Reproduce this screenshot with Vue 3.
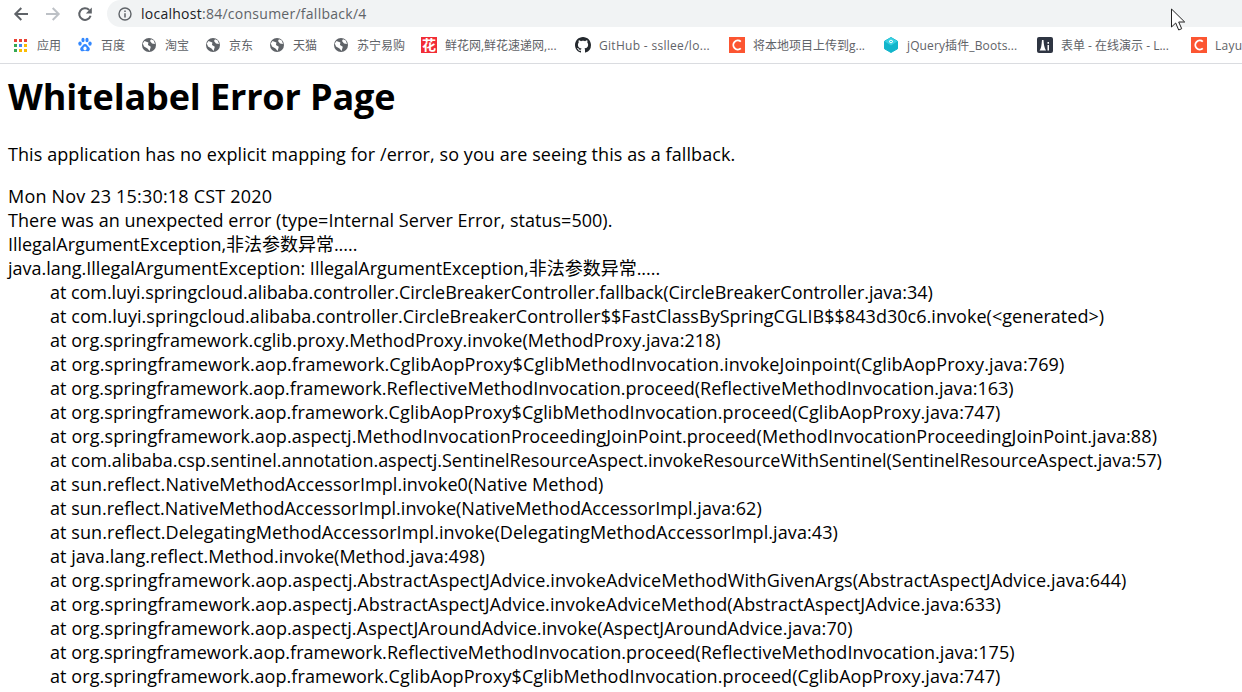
<script setup>
const bookmarks = [
  { id: 'apps', label: '应用', width: 64 },
  { id: 'baidu', label: '百度', width: 64 },
  { id: 'globe', label: '淘宝', width: 64 },
  { id: 'globe', label: '京东', width: 64 },
  { id: 'globe', label: '天猫', width: 64 },
  { id: 'globe', label: '苏宁易购', width: 88 },
  { id: 'flower', label: '鲜花网,鲜花速递网,...', width: 154 },
  { id: 'github', label: 'GitHub - ssllee/lo...', width: 154, spacing: 0.3 },
  { id: 'csdn', label: '将本地项目上传到g...', width: 154 },
  { id: 'jq', label: 'jQuery插件_Boots...', width: 154, spacing: 0.12 },
  { id: 'lt', label: '表单 - 在线演示 - L...', width: 154 },
  { id: 'csdn', label: 'Layu', width: 51, spacing: 0.3 }
]
const appColors = ['#ea4335', '#ea4335', '#ea4335', '#34a853', '#4285f4', '#fbbc04', '#34a853', '#fbbc04', '#fbbc04']
const appCells = appColors.map((fill, i) => ({ fill, x: 1 + (i % 3) * 5, y: 2 + Math.floor(i / 3) * 5 }))
const head = [
  { text: 'Mon Nov 23 15:30:18 CST 2020', spacing: 0.187 },
  { text: 'There was an unexpected error (type=Internal Server Error, status=500).', spacing: 0.025 },
  { text: 'IllegalArgumentException,非法参数异常.....', spacing: -0.034 },
  { text: 'java.lang.IllegalArgumentException: IllegalArgumentException,非法参数异常.....', spacing: -0.006 }
]
const stack = [
  { text: 'com.luyi.springcloud.alibaba.controller.CircleBreakerController.fallback(CircleBreakerController.java:34)', spacing: -0.05 },
  { text: 'com.luyi.springcloud.alibaba.controller.CircleBreakerController$$FastClassBySpringCGLIB$$843d30c6.invoke(<generated>)', spacing: 0.04 },
  { text: 'org.springframework.cglib.proxy.MethodProxy.invoke(MethodProxy.java:218)', spacing: 0.03 },
  { text: 'org.springframework.aop.framework.CglibAopProxy$CglibMethodInvocation.invokeJoinpoint(CglibAopProxy.java:769)', spacing: 0.1 },
  { text: 'org.springframework.aop.framework.ReflectiveMethodInvocation.proceed(ReflectiveMethodInvocation.java:163)', spacing: 0.025 },
  { text: 'org.springframework.aop.framework.CglibAopProxy$CglibMethodInvocation.proceed(CglibAopProxy.java:747)', spacing: 0.08 },
  { text: 'org.springframework.aop.aspectj.MethodInvocationProceedingJoinPoint.proceed(MethodInvocationProceedingJoinPoint.java:88)', spacing: 0.096 },
  { text: 'com.alibaba.csp.sentinel.annotation.aspectj.SentinelResourceAspect.invokeResourceWithSentinel(SentinelResourceAspect.java:57)', spacing: -0.015 },
  { text: 'sun.reflect.NativeMethodAccessorImpl.invoke0(Native Method)', spacing: 0.064 },
  { text: 'sun.reflect.NativeMethodAccessorImpl.invoke(NativeMethodAccessorImpl.java:62)', spacing: 0.03 },
  { text: 'sun.reflect.DelegatingMethodAccessorImpl.invoke(DelegatingMethodAccessorImpl.java:43)', spacing: 0.08 },
  { text: 'java.lang.reflect.Method.invoke(Method.java:498)', spacing: 0.04 },
  { text: 'org.springframework.aop.aspectj.AbstractAspectJAdvice.invokeAdviceMethodWithGivenArgs(AbstractAspectJAdvice.java:644)', spacing: 0.122 },
  { text: 'org.springframework.aop.aspectj.AbstractAspectJAdvice.invokeAdviceMethod(AbstractAspectJAdvice.java:633)', spacing: 0.117 },
  { text: 'org.springframework.aop.aspectj.AspectJAroundAdvice.invoke(AspectJAroundAdvice.java:70)', spacing: 0.1 },
  { text: 'org.springframework.aop.framework.ReflectiveMethodInvocation.proceed(ReflectiveMethodInvocation.java:175)', spacing: 0.033 },
  { text: 'org.springframework.aop.framework.CglibAopProxy$CglibMethodInvocation.proceed(CglibAopProxy.java:747)', spacing: 0.08 }
]
</script>

<template>
  <div class="window">
    <header class="toolbar">
      <div class="nav">
        <svg class="nav-icon" viewBox="0 0 16 16"><path d="M15 8H2.500M8.300 2 2.300 8 8.300 14" fill="none" stroke="#5f6368" stroke-width="2"/></svg>
        <svg class="nav-icon" viewBox="0 0 16 16"><path d="M1 8h12.500M7.700 2 13.700 8 7.700 14" fill="none" stroke="#bdc1c6" stroke-width="2"/></svg>
        <svg class="nav-icon" viewBox="0 0 16 16"><path d="M13.600 9.800A5.800 5.800 0 1 1 12.200 4" fill="none" stroke="#5f6368" stroke-width="2"/><path d="M14.800 1.400v6H8.800z" fill="#5f6368"/></svg>
      </div>
      <div class="omnibox">
        <svg class="info" viewBox="0 0 14 14"><circle cx="7" cy="7" r="6" fill="none" stroke="#5f6368" stroke-width="1.400"/><path d="M7 6.200v4.200M7 3.600v1.500" stroke="#5f6368" stroke-width="1.500"/></svg>
        <span class="url"><span class="host">localhost</span>:84/consumer/fallback/4</span>
      </div>
      <svg class="cursor" viewBox="0 0 16 24"><path d="M1.500 1v18l4.200-4 3 7 3-1.300-3-6.700h6z" fill="#fff" stroke="#222" stroke-width="1"/></svg>
    </header>

    <nav class="bookmarks">
      <div v-for="(b, i) in bookmarks" :key="i" class="bookmark" :style="{ width: b.width + 'px' }">
        <svg v-if="b.id === 'apps'" class="fav" viewBox="0 0 16 16">
          <rect v-for="(c, j) in appCells" :key="j" :x="c.x" :y="c.y" width="3" height="3" :fill="c.fill"/>
        </svg>
        <svg v-else-if="b.id === 'baidu'" class="fav" viewBox="0 0 16 16" fill="#3388ff">
          <ellipse cx="3" cy="6.600" rx="1.700" ry="2.200"/><ellipse cx="6" cy="3" rx="1.600" ry="2.300"/><ellipse cx="10" cy="3" rx="1.600" ry="2.300"/><ellipse cx="13" cy="6.600" rx="1.700" ry="2.200"/>
          <path d="M8 7c-2 0-2.500 2-4 3.200-1.500 1.300-.8 4.300 1.600 4 1-.1 1.600-.4 2.400-.4s1.500.3 2.500.4c2.400.3 3-2.700 1.500-4C10.500 9 10 7 8 7z"/>
          <ellipse cx="8" cy="11.400" rx="1.600" ry="1.900" fill="#fff"/>
        </svg>
        <svg v-else-if="b.id === 'globe'" class="fav" viewBox="0 0 16 16">
          <circle cx="8" cy="8" r="7" fill="#5f6368"/>
          <path d="M3.500 4 7.400 5.600 7 8 9.800 9.800 8.600 14 6.500 11.500 3 9.600 1.800 6.500zM10 2.300l2.800 1.300L14 7l-3-.6L9 4z" fill="#fff"/>
        </svg>
        <span v-else-if="b.id === 'flower'" class="fav flower">花</span>
        <svg v-else-if="b.id === 'github'" class="fav" viewBox="0 0 16 16">
          <path fill="#24292e" d="M8 0C3.580 0 0 3.580 0 8c0 3.540 2.290 6.530 5.470 7.590.4.070.55-.17.55-.38 0-.19-.01-.82-.01-1.490-2.010.37-2.530-.49-2.690-.94-.09-.23-.48-.94-.82-1.130-.28-.15-.68-.52-.01-.53.63-.01 1.080.58 1.230.82.720 1.210 1.870.870 2.330.660.070-.520.280-.870.510-1.070-1.780-.200-3.640-.890-3.640-3.950 0-.870.310-1.590.820-2.150-.080-.200-.360-1.020.080-2.120 0 0 .670-.210 2.200.820.640-.180 1.320-.270 2-.270s1.360.090 2 .270c1.530-1.040 2.200-.820 2.200-.820.440 1.100.160 1.920.080 2.120.510.560.820 1.270.820 2.150 0 3.070-1.870 3.750-3.650 3.950.290.250.540.730.540 1.480 0 1.070-.010 1.930-.010 2.200 0 .210.150.460.550.380A8.010 8.010 0 0 0 16 8c0-4.420-3.580-8-8-8z"/>
        </svg>
        <svg v-else-if="b.id === 'csdn'" class="fav" viewBox="0 0 16 16">
          <rect width="16" height="16" fill="#fc5531"/>
          <path d="M11.800 4.600A4.500 4.500 0 1 0 11.800 11.400" fill="none" stroke="#fff" stroke-width="1.900"/>
        </svg>
        <svg v-else-if="b.id === 'jq'" class="fav" viewBox="0 0 16 16">
          <path d="M8 .5 14.500 4.200v7.600L8 15.500 1.500 11.800V4.200z" fill="#12b5cb" stroke="#12b5cb" stroke-linejoin="round"/>
          <path d="M8 .5 14.500 4.200 8 8.500 1.500 4.200z" fill="#38d0e2"/>
          <path d="M8 3 10 4.500 8 6 6 4.500z" fill="none" stroke="#fff" stroke-width="1"/>
        </svg>
        <svg v-else class="fav" viewBox="0 0 16 16">
          <rect width="16" height="16" rx="2" fill="#2f3542"/>
          <path d="M2.500 13.500C4 12 4.500 9 5 3h1.500c.2 4 .8 8 2.500 10.500zM10.500 8H12v5.500h-1.500zM10.500 5H12v1.700h-1.500z" fill="#fff"/>
        </svg>
        <span class="bm-label" :style="{ letterSpacing: (b.spacing || 0) + 'px' }">{{ b.label }}</span>
      </div>
    </nav>

    <main class="page">
      <h1 class="title">Whitelabel Error Page</h1>
      <p class="lead">This application has no explicit mapping for /error, so you are seeing this as a fallback.</p>
      <div v-for="(l, i) in head" :key="'h' + i" :style="{ letterSpacing: l.spacing + 'px' }">{{ l.text }}</div>
      <div v-for="(s, i) in stack" :key="i" class="frame" :style="{ letterSpacing: s.spacing + 'px' }">at {{ s.text }}</div>
    </main>
  </div>
</template>

<style>
html, body { margin: 0; background: #fff; overflow: hidden; }
</style>

<style scoped>
.window {
  width: 1242px;
  height: 692px;
  overflow: hidden;
  font-family: "Open Sans", "Noto Sans CJK SC", sans-serif;
  color: #000;
}
.toolbar {
  position: relative;
  height: 27px;
  display: flex;
  padding-left: 13px;
}
.nav { display: flex; gap: 16px; align-items: center; height: 27px; }
.nav-icon { width: 16px; height: 16px; display: block; }
.omnibox {
  margin-left: 14px;
  flex: 1;
  background: #f1f3f4;
  border-radius: 14px 0 0 14px;
  display: flex;
  align-items: center;
  padding-left: 11px;
  gap: 9px;
}
.info { width: 14px; height: 14px; }
.url { font-size: 14px; color: #5f6368; letter-spacing: 0.26px; }
.host { color: #202124; }
.cursor { position: absolute; left: 1170px; top: 8px; width: 16px; height: 24px; }
.bookmarks {
  height: 36px;
  border-bottom: 1px solid #dadce0;
  display: flex;
  align-items: center;
  padding-left: 13px;
  white-space: nowrap;
  overflow: hidden;
}
.bookmark { display: flex; align-items: center; gap: 8px; flex: none; }
.fav { width: 16px; height: 16px; flex: none; }
.flower {
  background: #f22c36;
  color: #fff;
  font-size: 14px;
  font-weight: 700;
  line-height: 16px;
  text-align: center;
}
.bm-label { font-size: 12px; color: #5f6368; }
.page {
  font-size: 18px;
  line-height: 24px;
  padding: 0 8px;
  letter-spacing: 0.08px;
  white-space: nowrap;
}
.title {
  font-size: 36px;
  line-height: 48px;
  font-weight: 700;
  margin: 9px 0 0;
  letter-spacing: -0.14px;
}
.lead { margin: 21px 0 18px; }
.frame { padding-left: 42px; }
</style>
